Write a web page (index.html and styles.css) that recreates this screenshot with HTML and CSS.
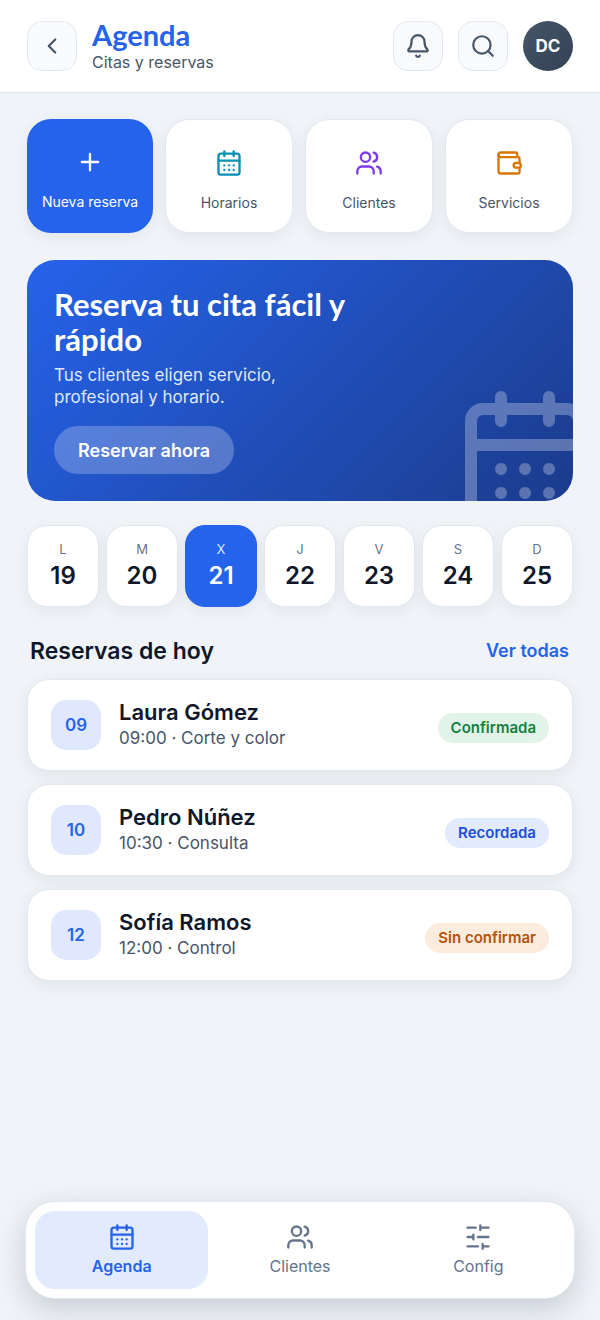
FILE: index.html
```html
<!DOCTYPE html>
<html lang="es">
<head>
<meta charset="utf-8">
<meta name="viewport" content="width=device-width, initial-scale=1">
<title>Agenda</title>
<link rel="stylesheet" href="styles.css">
</head>
<body>
<svg class="sprite" aria-hidden="true">
  <symbol id="calendar" viewBox="0 0 24 24"><path d="M8 2v4M16 2v4M3 10h18M8 14h.01M12 14h.01M16 14h.01M8 18h.01M12 18h.01M16 18h.01"/><rect x="3" y="4" width="18" height="18" rx="2"/></symbol>
  <symbol id="users" viewBox="0 0 24 24"><path d="M16 21v-2a4 4 0 0 0-4-4H6a4 4 0 0 0-4 4v2M16 3.128a4 4 0 0 1 0 7.744M22 21v-2a4 4 0 0 0-3-3.87"/><circle cx="9" cy="7" r="4"/></symbol>
</svg>
<header class="topbar">
  <button class="icon-btn" type="button" aria-label="Volver"><svg class="icon icon-sm" viewBox="0 0 24 24"><path d="m15 18-6-6 6-6"/></svg></button>
  <div class="heading">
    <h1 class="title">Agenda</h1>
    <p class="subtitle">Citas y reservas</p>
  </div>
  <button class="icon-btn" type="button" aria-label="Notificaciones"><svg class="icon icon-sm" viewBox="0 0 24 24"><path d="M10.268 21a2 2 0 0 0 3.464 0M3.262 15.326A1 1 0 0 0 4 17h16a1 1 0 0 0 .74-1.673C19.41 13.956 18 12.499 18 8A6 6 0 0 0 6 8c0 4.499-1.411 5.956-2.738 7.326"/></svg></button>
  <button class="icon-btn" type="button" aria-label="Buscar"><svg class="icon icon-sm" viewBox="0 0 24 24"><circle cx="11" cy="11" r="8"/><path d="m21 21-4.3-4.3"/></svg></button>
  <button class="avatar" type="button">DC</button>
</header>
<main class="content">
  <div class="actions">
    <button class="action action-primary" type="button"><svg class="icon" viewBox="0 0 24 24"><path d="M5 12h14M12 5v14"/></svg><span>Nueva reserva</span></button>
    <button class="action" type="button"><svg class="icon teal"><use href="#calendar"/></svg><span>Horarios</span></button>
    <button class="action" type="button"><svg class="icon violet"><use href="#users"/></svg><span>Clientes</span></button>
    <button class="action" type="button"><svg class="icon amber" viewBox="0 0 24 24"><path d="M19 7V4a1 1 0 0 0-1-1H5a2 2 0 0 0 0 4h15a1 1 0 0 1 1 1v4h-3a2 2 0 0 0 0 4h3a1 1 0 0 0 1-1v-2a1 1 0 0 0-1-1"/><path d="M3 5v14a2 2 0 0 0 2 2h15a1 1 0 0 0 1-1v-4"/></svg><span>Servicios</span></button>
  </div>
  <section class="hero">
    <h2 class="hero-title">Reserva tu cita fácil y rápido</h2>
    <p class="hero-text">Tus clientes eligen servicio, profesional y horario.</p>
    <button class="hero-btn" type="button">Reservar ahora</button>
    <svg class="icon hero-art" aria-hidden="true"><use href="#calendar"/></svg>
  </section>
  <div class="days">
    <button class="day" type="button"><span class="day-name">L</span><span class="day-num">19</span></button>
    <button class="day" type="button"><span class="day-name">M</span><span class="day-num">20</span></button>
    <button class="day day-active" type="button"><span class="day-name">X</span><span class="day-num">21</span></button>
    <button class="day" type="button"><span class="day-name">J</span><span class="day-num">22</span></button>
    <button class="day" type="button"><span class="day-name">V</span><span class="day-num">23</span></button>
    <button class="day" type="button"><span class="day-name">S</span><span class="day-num">24</span></button>
    <button class="day" type="button"><span class="day-name">D</span><span class="day-num">25</span></button>
  </div>
  <div class="section-head">
    <h2 class="section-title">Reservas de hoy</h2>
    <a class="section-link" href="#todas">Ver todas</a>
  </div>
  <ul class="bookings">
    <li class="booking">
      <span class="hour">09</span>
      <div class="booking-info"><h3 class="name">Laura Gómez</h3><p class="detail">09:00 · Corte y color</p></div>
      <span class="badge badge-green">Confirmada</span>
    </li>
    <li class="booking">
      <span class="hour">10</span>
      <div class="booking-info"><h3 class="name">Pedro Núñez</h3><p class="detail">10:30 · Consulta</p></div>
      <span class="badge badge-blue">Recordada</span>
    </li>
    <li class="booking">
      <span class="hour">12</span>
      <div class="booking-info"><h3 class="name">Sofía Ramos</h3><p class="detail">12:00 · Control</p></div>
      <span class="badge badge-orange">Sin confirmar</span>
    </li>
  </ul>
</main>
<nav class="tabbar">
  <a class="tab tab-active" href="#agenda" aria-current="page"><svg class="icon"><use href="#calendar"/></svg><span>Agenda</span></a>
  <a class="tab" href="#clientes"><svg class="icon"><use href="#users"/></svg><span>Clientes</span></a>
  <a class="tab" href="#config"><svg class="icon" viewBox="0 0 24 24"><path d="M21 4h-7M10 4H3M21 12h-9M8 12H3M21 20h-5M12 20H3M14 2v4M8 10v4M16 18v4"/></svg><span>Config</span></a>
</nav>
</body>
</html>
```
FILE: styles.css
```css
* { box-sizing: border-box; }

body {
  display: flex;
  flex-direction: column;
  min-height: 100vh;
  margin: 0;
  background: #f0f4f8;
  color: #0f172a;
  font-family: Inter, "Liberation Sans", sans-serif;
}

h1, h2, h3, p, ul { margin: 0; padding: 0; }
ul { list-style: none; }
a { text-decoration: none; }
button { padding: 0; border: 0; font-family: inherit; cursor: pointer; }

.sprite { position: absolute; width: 0; height: 0; }

.icon {
  flex: none;
  width: 28px;
  height: 28px;
  fill: none;
  stroke: currentColor;
  stroke-width: 2;
  stroke-linecap: round;
  stroke-linejoin: round;
}
.icon-sm { width: 26px; height: 26px; }
.teal { color: #0891b2; }
.violet { color: #7c3aed; }
.amber { color: #d97706; }

.topbar {
  display: flex;
  align-items: center;
  gap: 15px;
  padding: 19px 27px;
  border-bottom: 1px solid #dfe5ed;
  background: #fff;
}
.heading { flex: 1; }
.title {
  color: #2563eb;
  font-family: Lato, sans-serif;
  font-size: 29px;
  font-weight: 700;
  line-height: 32px;
}
.subtitle { color: #475569; font-size: 16px; line-height: 22px; }

.icon-btn {
  display: grid;
  place-items: center;
  width: 50px;
  height: 50px;
  border: 1px solid #e2e8f0;
  border-radius: 15px;
  background: #f8fafc;
  color: #475569;
}
.avatar {
  width: 50px;
  height: 50px;
  border-radius: 50%;
  background: linear-gradient(135deg, #475569, #334155);
  color: #fff;
  font-size: 17px;
  font-weight: 700;
}

.content { padding: 26px 27px; }

.actions { display: flex; gap: 12px; }
.action {
  display: flex;
  flex: 1 1 0;
  flex-direction: column;
  align-items: center;
  gap: 16px;
  padding: 29px 8px 19px;
  border: 1px solid #e2e8f0;
  border-radius: 24px;
  background: #fff;
  box-shadow: 0 4px 16px rgba(15, 23, 42, 0.06);
  color: #475569;
  font-size: 14px;
  line-height: 20px;
  white-space: nowrap;
}
.action-primary { border: 0; background: #2563eb; color: #fff; }

.hero {
  position: relative;
  margin-top: 27px;
  padding: 27px;
  overflow: hidden;
  border-radius: 28px;
  background: linear-gradient(135deg, #2563eb, #1c3c8c);
  color: #fff;
}
.hero-title {
  max-width: 340px;
  font-family: Lato, sans-serif;
  font-size: 31px;
  font-weight: 700;
  line-height: 35px;
}
.hero-text {
  max-width: 270px;
  margin-top: 7px;
  color: #dfe8fb;
  font-size: 17px;
  line-height: 22px;
}
.hero-btn {
  display: block;
  height: 48px;
  margin-top: 18px;
  padding: 0 24px;
  border-radius: 24px;
  background: rgba(255, 255, 255, 0.24);
  color: #fff;
  font-size: 18px;
  font-weight: 600;
}
.hero-art {
  position: absolute;
  right: -24px;
  bottom: -28px;
  width: 144px;
  height: 144px;
  opacity: 0.28;
}

.days { display: flex; gap: 7px; margin-top: 24px; }
.day {
  display: flex;
  flex: 1 1 0;
  flex-direction: column;
  align-items: center;
  gap: 3px;
  padding: 14px 0 15px;
  border: 1px solid #e2e8f0;
  border-radius: 20px;
  background: #fff;
  box-shadow: 0 4px 16px rgba(15, 23, 42, 0.06);
  color: #0f172a;
}
.day-name { color: #64748b; font-size: 13px; line-height: 18px; }
.day-num { font-size: 24px; font-weight: 600; line-height: 30px; }
.day-active { border-color: #2563eb; background: #2563eb; color: #fff; }
.day-active .day-name { color: #dbe6fd; }

.section-head {
  display: flex;
  align-items: center;
  justify-content: space-between;
  margin-top: 28px;
  padding: 0 4px 0 3px;
}
.section-title { font-size: 23px; font-weight: 600; line-height: 32px; }
.section-link { color: #2563eb; font-size: 18px; font-weight: 600; line-height: 32px; }

.bookings { display: grid; gap: 13px; margin-top: 12px; }
.booking {
  display: flex;
  align-items: center;
  gap: 18px;
  padding: 19px 23px;
  border: 1px solid #e2e8f0;
  border-radius: 22px;
  background: #fff;
  box-shadow: 0 4px 16px rgba(15, 23, 42, 0.07);
}
.hour {
  display: grid;
  place-items: center;
  width: 50px;
  height: 50px;
  border-radius: 15px;
  background: #e0e8fd;
  color: #2563eb;
  font-size: 17px;
  font-weight: 600;
}
.booking-info { flex: 1; }
.name { font-size: 22px; font-weight: 600; line-height: 27px; }
.detail { color: #475569; font-size: 17px; line-height: 25px; }
.badge {
  margin-top: 5px;
  padding: 0 13px;
  border-radius: 15px;
  font-size: 15px;
  font-weight: 600;
  line-height: 30px;
}
.badge-green { background: #e2f4e9; color: #15803d; }
.badge-blue { background: #e2eafd; color: #1d4ed8; }
.badge-orange { background: #fbecdd; color: #b45309; }

.tabbar {
  display: flex;
  gap: 5px;
  margin: auto 25px 21px;
  padding: 9px;
  border: 1px solid #e2e8f0;
  border-radius: 30px;
  background: #fff;
  box-shadow: 0 10px 30px rgba(15, 23, 42, 0.18);
}
.tab {
  display: flex;
  flex: 1 1 0;
  flex-direction: column;
  align-items: center;
  gap: 5px;
  padding: 12px 0;
  border-radius: 20px;
  color: #64748b;
  font-size: 16px;
  line-height: 21px;
}
.tab-active { background: #e2eafd; color: #2563eb; font-weight: 600; }
```
